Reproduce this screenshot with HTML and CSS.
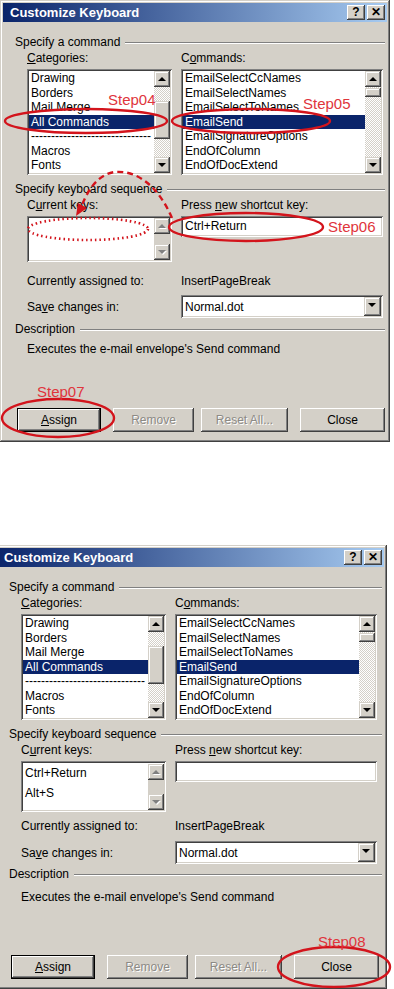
FILE: index.html
```html
<!DOCTYPE html>
<html>
<head>
<meta charset="utf-8">
<link rel="stylesheet" href="styles.css">
</head>
<body>
<div class="page">
  <div class="dialog d1">
    <div class="titlebar">
      <span class="title">Customize Keyboard</span>
      <div class="tbtns"><span class="tbtn">?</span><span class="tbtn">✕</span></div>
    </div>
    <div class="body">
      <div class="legend"><span>Specify a command</span><i></i></div>
      <div class="cols">
        <div class="col">
          <div class="label"><u>C</u>ategories:</div>
          <div class="listbox tall">
            <div class="items">
              <div class="item">Drawing</div>
              <div class="item">Borders</div>
              <div class="item">Mail Merge</div>
              <div class="item sel">All Commands</div>
              <div class="item">------------------------------</div>
              <div class="item">Macros</div>
              <div class="item">Fonts</div>
            </div>
            <div class="vscroll">
              <span class="arrow up"></span>
              <span class="track t1"></span>
              <span class="thumb th1"></span>
              <span class="track grow"></span>
              <span class="arrow down"></span>
            </div>
          </div>
        </div>
        <div class="col">
          <div class="label">C<u>o</u>mmands:</div>
          <div class="listbox tall">
            <div class="items">
              <div class="item">EmailSelectCcNames</div>
              <div class="item">EmailSelectNames</div>
              <div class="item">EmailSelectToNames</div>
              <div class="item sel">EmailSend</div>
              <div class="item">EmailSignatureOptions</div>
              <div class="item">EndOfColumn</div>
              <div class="item">EndOfDocExtend</div>
            </div>
            <div class="vscroll">
              <span class="arrow up"></span>
              <span class="track t2"></span>
              <span class="thumb th2"></span>
              <span class="track grow"></span>
              <span class="arrow down"></span>
            </div>
          </div>
        </div>
      </div>
      <div class="legend gap1"><span>Specify keyboard sequence</span><i></i></div>
      <div class="cols">
        <div class="col">
          <div class="label">C<u>u</u>rrent keys:</div>
          <div class="listbox short">
            <div class="items"></div>
            <div class="vscroll plain">
              <span class="arrow up dis"></span>
              <span class="track grow"></span>
              <span class="arrow down dis"></span>
            </div>
          </div>
        </div>
        <div class="col">
          <div class="label">Press <u>n</u>ew shortcut key:</div>
          <div class="textbox">Ctrl+Return</div>
        </div>
      </div>
      <div class="cols inforow assigned">
        <div class="col">Currently assigned to:</div>
        <div class="col">InsertPageBreak</div>
      </div>
      <div class="cols inforow save">
        <div class="col">Sa<u>v</u>e changes in:</div>
        <div class="col"><div class="combo"><span class="ctext">Normal.dot</span><span class="arrow down cbtn"></span></div></div>
      </div>
      <div class="legend gap2"><span>Description</span><i></i></div>
      <div class="desc">Executes the e-mail envelope's Send command</div>
      <div class="buttons">
        <button class="btn def"><u>A</u>ssign</button>
        <button class="btn dis">Remove</button>
        <button class="btn dis">Reset All...</button>
        <button class="btn">Close</button>
      </div>
    </div>
  </div>

  <div class="dialog d2">
    <div class="titlebar">
      <span class="title">Customize Keyboard</span>
      <div class="tbtns"><span class="tbtn">?</span><span class="tbtn">✕</span></div>
    </div>
    <div class="body">
      <div class="legend"><span>Specify a command</span><i></i></div>
      <div class="cols">
        <div class="col">
          <div class="label"><u>C</u>ategories:</div>
          <div class="listbox tall">
            <div class="items">
              <div class="item">Drawing</div>
              <div class="item">Borders</div>
              <div class="item">Mail Merge</div>
              <div class="item sel">All Commands</div>
              <div class="item">------------------------------</div>
              <div class="item">Macros</div>
              <div class="item">Fonts</div>
            </div>
            <div class="vscroll">
              <span class="arrow up"></span>
              <span class="track t1"></span>
              <span class="thumb th1"></span>
              <span class="track grow"></span>
              <span class="arrow down"></span>
            </div>
          </div>
        </div>
        <div class="col">
          <div class="label">C<u>o</u>mmands:</div>
          <div class="listbox tall">
            <div class="items">
              <div class="item">EmailSelectCcNames</div>
              <div class="item">EmailSelectNames</div>
              <div class="item">EmailSelectToNames</div>
              <div class="item sel">EmailSend</div>
              <div class="item">EmailSignatureOptions</div>
              <div class="item">EndOfColumn</div>
              <div class="item">EndOfDocExtend</div>
            </div>
            <div class="vscroll">
              <span class="arrow up"></span>
              <span class="track t2"></span>
              <span class="thumb th2"></span>
              <span class="track grow"></span>
              <span class="arrow down"></span>
            </div>
          </div>
        </div>
      </div>
      <div class="legend gap1"><span>Specify keyboard sequence</span><i></i></div>
      <div class="cols">
        <div class="col">
          <div class="label">C<u>u</u>rrent keys:</div>
          <div class="listbox short">
            <div class="items">
              <div class="item">Ctrl+Return</div>
              <div class="item">Alt+S</div>
            </div>
            <div class="vscroll plain">
              <span class="arrow up dis"></span>
              <span class="track grow"></span>
              <span class="arrow down dis"></span>
            </div>
          </div>
        </div>
        <div class="col">
          <div class="label">Press <u>n</u>ew shortcut key:</div>
          <div class="textbox"></div>
        </div>
      </div>
      <div class="cols inforow assigned">
        <div class="col">Currently assigned to:</div>
        <div class="col">InsertPageBreak</div>
      </div>
      <div class="cols inforow save">
        <div class="col">Sa<u>v</u>e changes in:</div>
        <div class="col"><div class="combo"><span class="ctext">Normal.dot</span><span class="arrow down cbtn"></span></div></div>
      </div>
      <div class="legend gap2"><span>Description</span><i></i></div>
      <div class="desc">Executes the e-mail envelope's Send command</div>
      <div class="buttons">
        <button class="btn def"><u>A</u>ssign</button>
        <button class="btn dis">Remove</button>
        <button class="btn dis">Reset All...</button>
        <button class="btn">Close</button>
      </div>
    </div>
  </div>

  <svg class="annot" width="394" height="989" viewBox="0 0 394 989">
    <g fill="none" stroke="#d3141c" stroke-width="2.4">
      <ellipse cx="86" cy="121" rx="81" ry="12"/>
      <ellipse cx="251" cy="121" rx="79" ry="12"/>
      <ellipse cx="246" cy="227" rx="77" ry="14"/>
      <ellipse cx="58" cy="418" rx="56" ry="19"/>
      <ellipse cx="334" cy="967" rx="56" ry="20"/>
      <ellipse cx="88" cy="229" rx="60" ry="11" stroke-dasharray="1.5 3" stroke-width="2.6"/>
      <path d="M172 218 C 160 190 140 170 115 172 C 98 174 88 190 82 205" stroke-dasharray="6 4"/>
    </g>
    <polygon points="76,216 78,203 87,208" fill="#d3141c"/>
    <g class="steps" fill="#e0353c">
      <text x="108" y="105">Step04</text>
      <text x="303" y="109">Step05</text>
      <text x="328" y="232">Step06</text>
      <text x="37" y="397">Step07</text>
      <text x="318" y="947">Step08</text>
    </g>
  </svg>
</div>
</body>
</html>
```

FILE: styles.css
```css
* { box-sizing: border-box; }
html, body { margin: 0; padding: 0; background: #fff; }
body {
  font-family: "Liberation Sans", Arial, sans-serif;
  font-size: 12px;
  color: #000;
}
u { text-decoration: underline; text-underline-offset: 1px; }
.page { position: relative; width: 394px; height: 989px; overflow: hidden; }

.dialog {
  width: 390px;
  height: 442px;
  background: #d4d0c8;
  padding: 3px;
  box-shadow: inset -1px -1px #404040, inset 1px 1px #d4d0c8,
              inset -2px -2px #808080, inset 2px 2px #fff;
  display: flex;
  flex-direction: column;
}
.d2 { margin-top: 103px; margin-left: -6px; width: 393px; height: 444px; }

.titlebar {
  height: 19px;
  flex: none;
  background: linear-gradient(to right, #0a246a, #a6caf0);
  display: flex;
  align-items: center;
  justify-content: space-between;
  padding: 0 2px 0 7px;
}
.title { color: #fff; font-weight: bold; font-size: 13px; }
.tbtns { display: flex; gap: 2px; }
.tbtn {
  width: 18px; height: 15px;
  background: #d4d0c8;
  box-shadow: inset -1px -1px #404040, inset 1px 1px #fff,
              inset -2px -2px #808080, inset 2px 2px #d4d0c8;
  font-weight: bold; font-size: 12px; line-height: 15px;
  display: flex; align-items: center; justify-content: center;
}

.body { flex: 1; padding: 0 2px 0 12px; display: flex; flex-direction: column; }

.legend { display: flex; align-items: center; height: 14px; margin-top: 13px; }
.legend span { padding-right: 5px; line-height: 14px; }
.legend i { flex: 1; height: 2px; border-top: 1px solid #808080; border-bottom: 1px solid #fff; margin-top: 1px; }
.legend.gap1 { margin-top: 7px; }
.legend.gap2 { margin-top: 4px; }

.cols { display: grid; grid-template-columns: 145px 202px; column-gap: 9px; margin-left: 12px; }
.label { line-height: 14px; margin-top: 2px; margin-bottom: 4px; }

.listbox {
  background: #fff;
  padding: 2px;
  box-shadow: inset 1px 1px #808080, inset -1px -1px #fff,
              inset 2px 2px #404040, inset -2px -2px #d4d0c8;
  display: flex;
}
.listbox.tall { height: 106px; }
.listbox.short { height: 46px; }
.items { flex: 1; overflow: hidden; }
.item { height: 14.5px; line-height: 14.5px; padding-left: 2px; white-space: nowrap; overflow: hidden; }
.item.sel { background: #0a246a; color: #fff; }

.vscroll { width: 16px; display: flex; flex-direction: column; }
.track { background: repeating-conic-gradient(#d4d0c8 0 25%, #fff 0 50%) 0 0 / 2px 2px; }
.plain .track { background: #d4d0c8; }
.track.grow { flex: 1; }
.t1 { height: 14px; }
.t2 { height: 1px; }
.thumb {
  background: #d4d0c8;
  box-shadow: inset -1px -1px #404040, inset 1px 1px #d4d0c8,
              inset -2px -2px #808080, inset 2px 2px #fff;
}
.th1 { height: 38px; }
.th2 { height: 9px; }

.arrow {
  width: 16px; height: 16px; flex: none;
  background: #d4d0c8;
  box-shadow: inset -1px -1px #404040, inset 1px 1px #d4d0c8,
              inset -2px -2px #808080, inset 2px 2px #fff;
  position: relative;
}
.arrow::after {
  content: "";
  position: absolute;
  left: 4px; top: 6px;
  border-left: 4px solid transparent;
  border-right: 4px solid transparent;
}
.arrow.up::after { border-bottom: 4px solid #000; }
.arrow.down::after { border-top: 4px solid #000; top: 6px; }
.arrow.dis.up::after { border-bottom-color: #808080; filter: drop-shadow(1px 1px 0 #fff); }
.arrow.dis.down::after { border-top-color: #808080; filter: drop-shadow(1px 1px 0 #fff); }

.textbox {
  height: 21px;
  background: #fff;
  padding: 3px 4px;
  line-height: 15px;
  box-shadow: inset 1px 1px #808080, inset -1px -1px #fff,
              inset 2px 2px #404040, inset -2px -2px #d4d0c8;
}

.inforow { align-items: center; }
.assigned { margin-top: 12px; line-height: 14px; }
.save { margin-top: 7px; }
.combo {
  height: 23px;
  background: #fff;
  padding: 2px;
  display: flex;
  align-items: center;
  box-shadow: inset 1px 1px #808080, inset -1px -1px #fff,
              inset 2px 2px #404040, inset -2px -2px #d4d0c8;
}
.ctext { flex: 1; padding-left: 2px; }
.cbtn { height: 19px; width: 17px; }
.cbtn::after { top: 8px; }

.desc { margin-left: 12px; margin-top: 6px; line-height: 14px; }

/* second screenshot is slightly stretched in its lower half */
.d2 .listbox.short { height: 51px; padding-top: 3px; }
.d2 .listbox.short .item { height: 20px; line-height: 18px; }
.d2 .assigned { margin-top: 7px; }
.d2 .save { margin-top: 8px; }
.d2 .legend.gap2 { margin-top: 3px; }
.d2 .desc { margin-top: 9px; }

.buttons {
  margin-top: auto;
  margin-bottom: 7px;
  display: flex;
  margin-left: 2px;
}
.btn {
  font: inherit;
  height: 24px;
  width: 84px;
  border: 0;
  padding: 0;
  background: #d4d0c8;
  color: #000;
  box-shadow: inset -1px -1px #404040, inset 1px 1px #fff,
              inset -2px -2px #808080, inset 2px 2px #d4d0c8;
  margin-right: 12px;
}
.btn:nth-child(2) { width: 81px; margin-right: 7px; }
.btn:nth-child(3) { width: 87px; }
.btn:last-child { width: 85px; margin-right: 0; }
.btn.def {
  box-shadow: inset 0 0 0 1px #000, inset -2px -2px #404040, inset 2px 2px #fff,
              inset -3px -3px #808080;
}
.btn.dis { color: #8c8a85; text-shadow: 1px 1px 0 #fff; }

.annot { position: absolute; left: 0; top: 0; pointer-events: none; }
.steps text { font-family: "Liberation Sans", Arial, sans-serif; font-size: 15px; }
```
